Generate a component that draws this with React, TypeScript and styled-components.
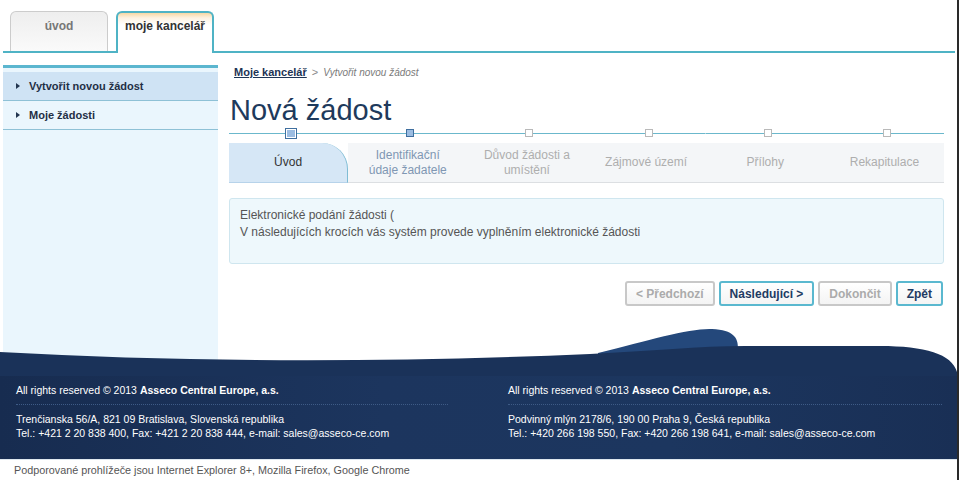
import * as React from 'react';
import styled, { createGlobalStyle } from 'styled-components';

const GlobalStyle = createGlobalStyle`
    html, body {
        margin: 0;
        padding: 0;
        background: #ffffff;
    }
    body {
        font-family: "Liberation Sans", Arial, sans-serif;
    }
`

const Page = styled.div`
    width: 957px;
    height: 480px;
    border-right: 2px solid #2a2a2a;
    overflow: hidden;
    display: flex;
    flex-direction: column;
    background: #fff;

    & > * {
        flex-shrink: 0;
    }
`

/* ---------- header tabs ---------- */

const Header = styled.div`
    height: 40px;
    padding: 11px 0 0 10px;
    margin: 0 2px 0 3px;
    display: flex;
    align-items: flex-end;
    gap: 6px;
    border-bottom: 2px solid #4fb3c5;
`

const TopTab = styled.div<{ $active?: boolean }>`
    box-sizing: border-box;
    width: 98px;
    height: ${p => (p.$active ? '42px' : '40px')};
    margin-bottom: ${p => (p.$active ? '-2px' : '0')};
    margin-left: ${p => (p.$active ? '2px' : '-3px')};
    border: ${p => (p.$active ? '2px solid #4fb3c5' : '1px solid #cccccc')};
    border-bottom: none;
    border-radius: 6px 6px 0 0;
    background: ${p => (p.$active
        ? 'linear-gradient(#f8d8a4 0px, #fdf2e2 5px, #ffffff 12px)'
        : 'linear-gradient(#eeeeee, #fafafa)')};
    text-align: center;
    padding-top: ${p => (p.$active ? '6px' : '7px')};
    font-size: 12px;
    font-weight: bold;
    color: ${p => (p.$active ? '#333333' : '#777777')};
`

/* ---------- body ---------- */

const Body = styled.div`
    display: flex;
    margin-top: 12px;
    height: 263px;
`

const Sidebar = styled.div`
    width: 215px;
    margin-left: 3px;
    background: #eaf6fd;
    border-top: 3px solid #5bb6cf;
    padding-top: 4px;
`

const SideItem = styled.div<{ $active?: boolean }>`
    height: 28px;
    display: flex;
    align-items: center;
    gap: 9px;
    padding-left: 13px;
    background: ${p => (p.$active ? '#cfe3f4' : 'transparent')};
    border-bottom: 1px solid #8ec1d6;
    font-size: 11px;
    font-weight: bold;
    color: #1f2f45;
`

const Bullet = styled.span`
    width: 0;
    height: 0;
    border-top: 3px solid transparent;
    border-bottom: 3px solid transparent;
    border-left: 4px solid #233650;
`

const Main = styled.div`
    width: 715px;
    margin-left: 11px;
    display: flex;
    flex-direction: column;
`

const Breadcrumb = styled.div`
    height: 14px;
    padding-left: 5px;
    display: flex;
    align-items: center;
    gap: 5px;
    font-size: 11px;
    color: #8a8a8a;
`

const CrumbLink = styled.a`
    font-weight: bold;
    color: #1d3455;
    text-decoration: underline;
`

const CrumbCurrent = styled.span`
    font-size: 10px;
    font-style: italic;
    color: #7a7a7a;
`

const Title = styled.h1`
    margin: 14px 0 0 1px;
    font-size: 29px;
    line-height: 34px;
    font-weight: normal;
    color: #1e3a5c;
`

/* ---------- stepper ---------- */

const Steps = styled.div`
    display: grid;
    grid-template-columns: repeat(6, 1fr);
`

const Step = styled.div`
    display: flex;
    flex-direction: column;
`

const Track = styled.div`
    height: 12px;
    display: flex;
    align-items: center;
    justify-content: center;
    padding-left: 5px;
    background: linear-gradient(#6bb8cc, #6bb8cc) center / 100% 1px no-repeat;
`

const Marker = styled.span<{ $state: 'current' | 'done' | 'todo' }>`
    box-sizing: border-box;
    display: block;
    width: ${p => (p.$state === 'current' ? '12px' : '8px')};
    height: ${p => (p.$state === 'current' ? '11px' : '8px')};
    border: 1px solid ${p => (p.$state === 'todo' ? '#b9b9b9' : '#3f6f9f')};
    background: ${p => (p.$state === 'todo' ? '#ffffff' : '#9cbde2')};
    box-shadow: ${p => (p.$state === 'current' ? 'inset 0 0 0 1px #ffffff' : 'none')};
`

const StepTab = styled.div<{ $active?: boolean; $tone: string }>`
    margin-top: 4px;
    height: 40px;
    box-sizing: border-box;
    display: flex;
    align-items: center;
    justify-content: center;
    text-align: center;
    white-space: pre-line;
    font-size: 12px;
    line-height: 15px;
    color: ${p => p.$tone};
    background: ${p => (p.$active ? '#d6e7f6' : '#f4f6f8')};
    border-bottom: 1px solid ${p => (p.$active ? '#b7d3ea' : '#dcdfe2')};
    border-right: ${p => (p.$active ? '1px solid #7fbcd4' : 'none')};
    border-top-right-radius: ${p => (p.$active ? '26px' : '0')};
`

const InfoBox = styled.div`
    margin-top: 15px;
    height: 66px;
    box-sizing: border-box;
    padding: 8px 10px 7px;
    background: #eef8fc;
    border: 1px solid #cfe6ef;
    border-radius: 3px;
    font-size: 12px;
    line-height: 17px;
    color: #555555;
`

const Actions = styled.div`
    margin-top: 17px;
    display: flex;
    justify-content: flex-end;
    gap: 4px;
    padding-right: 1px;
`

const Button = styled.button<{ $disabled?: boolean }>`
    height: 25px;
    padding: 0 9px;
    border: 2px solid ${p => (p.$disabled ? '#c8c8c8' : '#5ab8cf')};
    border-radius: 3px;
    background: linear-gradient(#ffffff, #f4f4f4);
    font-family: "Liberation Sans", Arial, sans-serif;
    font-size: 12px;
    font-weight: bold;
    color: ${p => (p.$disabled ? '#ababab' : '#1f3b63')};
    cursor: pointer;
`

/* ---------- footer ---------- */

const Wave = styled.svg`
    display: block;
    width: 957px;
    height: 48px;
`

const Footer = styled.div`
    box-sizing: border-box;
    height: 83px;
    background: linear-gradient(90deg, #172c50 0%, #1c355e 40%, #1c365f 70%, #192f55 100%);
    display: grid;
    grid-template-columns: 432px 434px;
    column-gap: 60px;
    padding: 7px 0 0 16px;
    color: #ffffff;
    font-size: 10.5px;
    line-height: 14px;
`

const FooterCol = styled.div`
    display: flex;
    flex-direction: column;
`

const Dots = styled.div`
    height: 0;
    margin: 7px 0 7px;
    border-top: 1px dotted #3e5b86;
`

const BottomBar = styled.div`
    box-sizing: border-box;
    height: 21px;
    display: flex;
    align-items: center;
    padding-left: 14px;
    font-size: 10.8px;
    color: #555555;
    background: #ffffff;
    border-top: 1px solid #dfe8ef;
`

const steps = [
    { label: 'Úvod', tone: '#333333', state: 'current' as const, active: true },
    { label: 'Identifikační\núdaje žadatele', tone: '#7f97b3', state: 'done' as const },
    { label: 'Důvod žádosti a\numístění', tone: '#aeaeae', state: 'todo' as const },
    { label: 'Zájmové území', tone: '#aeaeae', state: 'todo' as const },
    { label: 'Přílohy', tone: '#aeaeae', state: 'todo' as const },
    { label: 'Rekapitulace', tone: '#aeaeae', state: 'todo' as const },
]

const offices = [
    {
        address: 'Trenčianska 56/A, 821 09 Bratislava, Slovenská republika',
        tel: 'Tel.: +421 2 20 838 400, Fax: +421 2 20 838 444, e-mail: sales@asseco-ce.com',
    },
    {
        address: 'Podvinný mlýn 2178/6, 190 00 Praha 9, Česká republika',
        tel: 'Tel.: +420 266 198 550, Fax: +420 266 198 641, e-mail: sales@asseco-ce.com',
    },
]

export default function App() {
    return (
        <>
            <GlobalStyle />
            <Page>
                <Header>
                    <TopTab>úvod</TopTab>
                    <TopTab $active>moje kancelář</TopTab>
                </Header>

                <Body>
                    <Sidebar>
                        <SideItem $active><Bullet />Vytvořit novou žádost</SideItem>
                        <SideItem><Bullet />Moje žádosti</SideItem>
                    </Sidebar>

                    <Main>
                        <Breadcrumb>
                            <CrumbLink>Moje kancelář</CrumbLink>
                            <span>&gt;</span>
                            <CrumbCurrent>Vytvořit novou žádost</CrumbCurrent>
                        </Breadcrumb>
                        <Title>Nová žádost</Title>

                        <Steps>
                            {steps.map(s => (
                                <Step key={s.label}>
                                    <Track><Marker $state={s.state} /></Track>
                                    <StepTab $active={s.active} $tone={s.tone}>{s.label}</StepTab>
                                </Step>
                            ))}
                        </Steps>

                        <InfoBox>
                            Elektronické podání žádosti (<br />
                            V následujících krocích vás systém provede vyplněním elektronické žádosti
                        </InfoBox>

                        <Actions>
                            <Button $disabled>&lt; Předchozí</Button>
                            <Button>Následující &gt;</Button>
                            <Button $disabled>Dokončit</Button>
                            <Button>Zpět</Button>
                        </Actions>
                    </Main>
                </Body>

                <Wave viewBox="0 0 957 48">
                    <rect x="3" y="0" width="215" height="48" fill="#eaf6fd" />
                    <path d="M598,25 C650,12 690,0 712,1 C734,2 738,10 738,20 L738,30 L598,30 Z" fill="#24487b" />
                    <path
                        d="M0,24 C180,34 380,35 590,26 C650,23 700,18 745,18 L880,18 C925,18 952,26 957,44 L957,48 L0,48 Z"
                        fill="#1a3259"
                    />
                </Wave>

                <Footer>
                    {offices.map(o => (
                        <FooterCol key={o.address}>
                            <span>All rights reserved © 2013 <b>Asseco Central Europe, a.s.</b></span>
                            <Dots />
                            <span>{o.address}</span>
                            <span>{o.tel}</span>
                        </FooterCol>
                    ))}
                </Footer>

                <BottomBar>Podporované prohlížeče jsou Internet Explorer 8+, Mozilla Firefox, Google Chrome</BottomBar>
            </Page>
        </>
    );
}
